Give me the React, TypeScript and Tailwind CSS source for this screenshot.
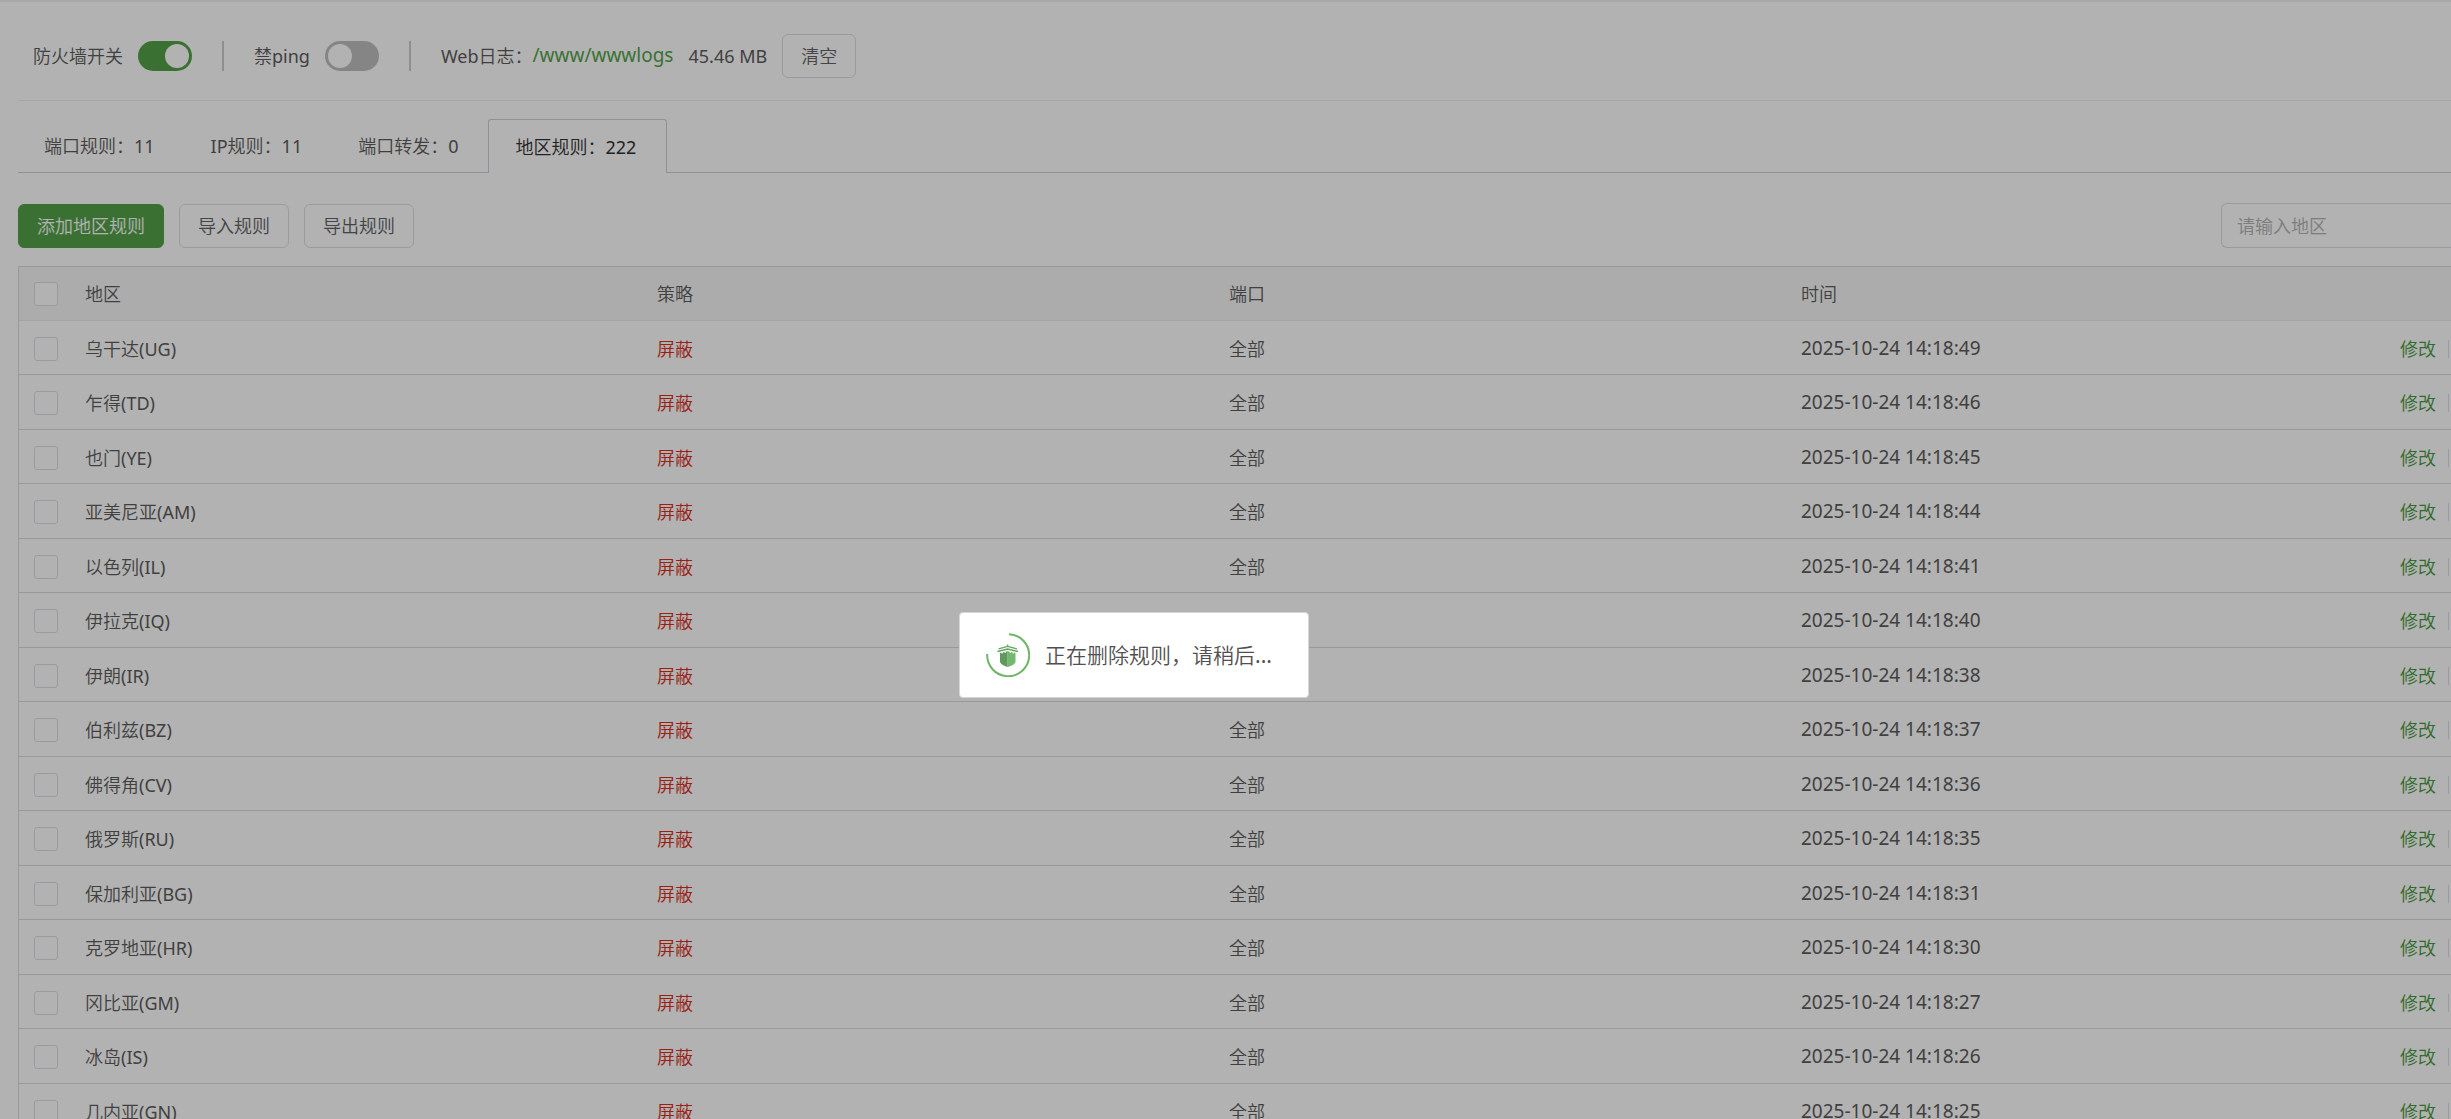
const rules = [
  { region: "乌干达(UG)", time: "2025-10-24 14:18:49" },
  { region: "乍得(TD)", time: "2025-10-24 14:18:46" },
  { region: "也门(YE)", time: "2025-10-24 14:18:45" },
  { region: "亚美尼亚(AM)", time: "2025-10-24 14:18:44" },
  { region: "以色列(IL)", time: "2025-10-24 14:18:41" },
  { region: "伊拉克(IQ)", time: "2025-10-24 14:18:40" },
  { region: "伊朗(IR)", time: "2025-10-24 14:18:38" },
  { region: "伯利兹(BZ)", time: "2025-10-24 14:18:37" },
  { region: "佛得角(CV)", time: "2025-10-24 14:18:36" },
  { region: "俄罗斯(RU)", time: "2025-10-24 14:18:35" },
  { region: "保加利亚(BG)", time: "2025-10-24 14:18:31" },
  { region: "克罗地亚(HR)", time: "2025-10-24 14:18:30" },
  { region: "冈比亚(GM)", time: "2025-10-24 14:18:27" },
  { region: "冰岛(IS)", time: "2025-10-24 14:18:26" },
  { region: "几内亚(GN)", time: "2025-10-24 14:18:25" },
]

const tabs = [
  { label: "端口规则：11", active: false },
  { label: "IP规则：11", active: false },
  { label: "端口转发：0", active: false },
  { label: "地区规则：222", active: true },
]

function Switch({ id, defaultChecked }: { id: string; defaultChecked?: boolean }) {
  return (
    <input
      id={id}
      type="checkbox"
      role="switch"
      defaultChecked={defaultChecked}
      className="h-[30px] w-[54px] cursor-pointer appearance-none rounded-full bg-[#bfbfbf] p-[3px] before:block before:size-6 before:rounded-full before:bg-white checked:bg-[#54a34a] checked:before:ml-6"
    />
  )
}

function Checkbox({ label }: { label: string }) {
  return (
    <input
      type="checkbox"
      aria-label={label}
      className="block size-6 appearance-none rounded-[3px] border border-[#dcdfe6] bg-white checked:bg-[#54a34a]"
    />
  )
}

function Button({ children, primary }: { children: string; primary?: boolean }) {
  return (
    <button
      type="button"
      className={
        primary
          ? "h-11 rounded-md border border-[#54a34a] bg-[#54a34a] px-[18px] text-white"
          : "h-11 rounded-md border border-[#dcdfe6] bg-white px-[18px] text-[#606266]"
      }
    >
      {children}
    </button>
  )
}

function Divider() {
  return <span className="mx-[30px] h-[30px] w-0.5 bg-[#cccccc]" />
}

function StatusBar() {
  return (
    <div className="flex h-[99px] items-center border-b border-[#ebeef5] pt-2.5 pl-[15px]">
      <label htmlFor="firewall" className="mr-[15px]">
        防火墙开关
      </label>
      <Switch id="firewall" defaultChecked />
      <Divider />
      <label htmlFor="ping" className="mr-[15px]">
        禁ping
      </label>
      <Switch id="ping" />
      <Divider />
      <span>Web日志：</span>
      <a href="#" className="mr-[15px] text-[19px] text-[#54a34a]">
        /www/wwwlogs
      </a>
      <span className="mr-[15px]">45.46 MB</span>
      <Button>清空</Button>
    </div>
  )
}

function Tabs() {
  return (
    <div role="tablist" className="mt-[18px] flex h-[54px]">
      {tabs.map((tab) => (
        <button
          key={tab.label}
          type="button"
          role="tab"
          aria-selected={tab.active}
          className={
            tab.active
              ? "rounded-t-[3px] border border-b-0 border-[#cdd0dc] pr-[30px] pl-[26px] text-[#303133]"
              : "border-b border-[#cdd0dc] pr-[30px] pl-[26px]"
          }
        >
          {tab.label}
        </button>
      ))}
      <div className="flex-1 border-b border-[#cdd0dc]" />
    </div>
  )
}

function Toolbar() {
  return (
    <div className="mt-[30px] flex items-center gap-[15px]">
      <Button primary>添加地区规则</Button>
      <Button>导入规则</Button>
      <Button>导出规则</Button>
      <input
        type="text"
        aria-label="请输入地区"
        placeholder="请输入地区"
        className="ml-auto h-[45px] w-[230px] rounded-l-md border border-r-0 border-[#dcdfe6] bg-white px-[15px] placeholder:text-[#b4b4b4]"
      />
    </div>
  )
}

function RulesTable() {
  return (
    <div className="mt-[18px] border-t border-l border-[#dcdcdc]">
      <table className="w-full table-fixed border-separate border-spacing-0 text-left">
        <thead>
          <tr className="h-[54px] bg-[#f6f6f6] *:border-b *:border-[#ebebeb] *:py-0 *:pl-[15px] *:font-normal">
            <th className="w-[51px]">
              <Checkbox label="全选" />
            </th>
            <th>地区</th>
            <th>策略</th>
            <th>端口</th>
            <th>时间</th>
            <th className="w-[93px]" />
          </tr>
        </thead>
        <tbody>
          {rules.map((rule) => (
            <tr
              key={rule.region}
              className="odd:h-[54px] even:h-[55px] *:border-b *:border-[#dcdcdc] *:pt-0.5 *:pb-0 *:pl-[15px]"
            >
              <td>
                <Checkbox label={rule.region} />
              </td>
              <td>{rule.region}</td>
              <td className="text-[#dd2f1c]">屏蔽</td>
              <td>全部</td>
              <td className="text-[19px]">{rule.time}</td>
              <td>
                <div className="flex items-center justify-end gap-3 pr-0.5">
                  <a href="#" className="whitespace-nowrap text-[#469a3b]">
                    修改
                  </a>
                  <span className="h-[18px] w-px bg-[#dcdfe6]" />
                </div>
              </td>
            </tr>
          ))}
        </tbody>
      </table>
    </div>
  )
}

function Spinner() {
  return (
    <svg viewBox="0 0 44 44" className="size-11" fill="none">
      <path d="M23 1.2A21 21 0 1 1 1.200 21" stroke="#6fb56a" strokeWidth="2" />
      <path d="M14 20l1.500-.5v1l1.500-.3v-1l1.500-.3v1l1.500-.3v-1l1.700-.3V34c-4.700-1.500-7.700-3.500-7.700-5.500z" fill="#5f9a5c" />
      <path d="M29.500 20l-1.500-.5v1l-1.500-.3v-1l-1.500-.3v1l-1.500-.3v-1l-1.800-.3V34c5-1.500 7.800-3.500 7.800-5.500z" fill="#74b870" />
      <path
        d="M11.500 18.500L21.700 16L32 18.500M12.500 15.800L21.700 13.300L31 15.800M21.700 11.500v2"
        stroke="#62a65e"
        strokeWidth="1.3"
      />
    </svg>
  )
}

function LoadingOverlay() {
  return (
    <div className="fixed inset-0 bg-black/30">
      <div
        role="status"
        className="absolute top-[612px] left-[959px] flex h-[86px] items-center gap-[15px] rounded border border-[#d6d6d6] bg-white pr-9 pl-[26px] text-[21px] whitespace-nowrap text-[#505050]"
      >
        <Spinner />
        正在删除规则，请稍后...
      </div>
    </div>
  )
}

export default function App() {
  return (
    <div className="h-screen overflow-hidden border-t-2 border-[#f0f0f0] bg-white pl-[18px] font-['Noto_Sans','Noto_Sans_CJK_SC_DemiLight','Noto_Sans_CJK_SC',sans-serif] text-lg text-[#5c5c5c]">
      <StatusBar />
      <Tabs />
      <Toolbar />
      <RulesTable />
      <LoadingOverlay />
    </div>
  )
}
